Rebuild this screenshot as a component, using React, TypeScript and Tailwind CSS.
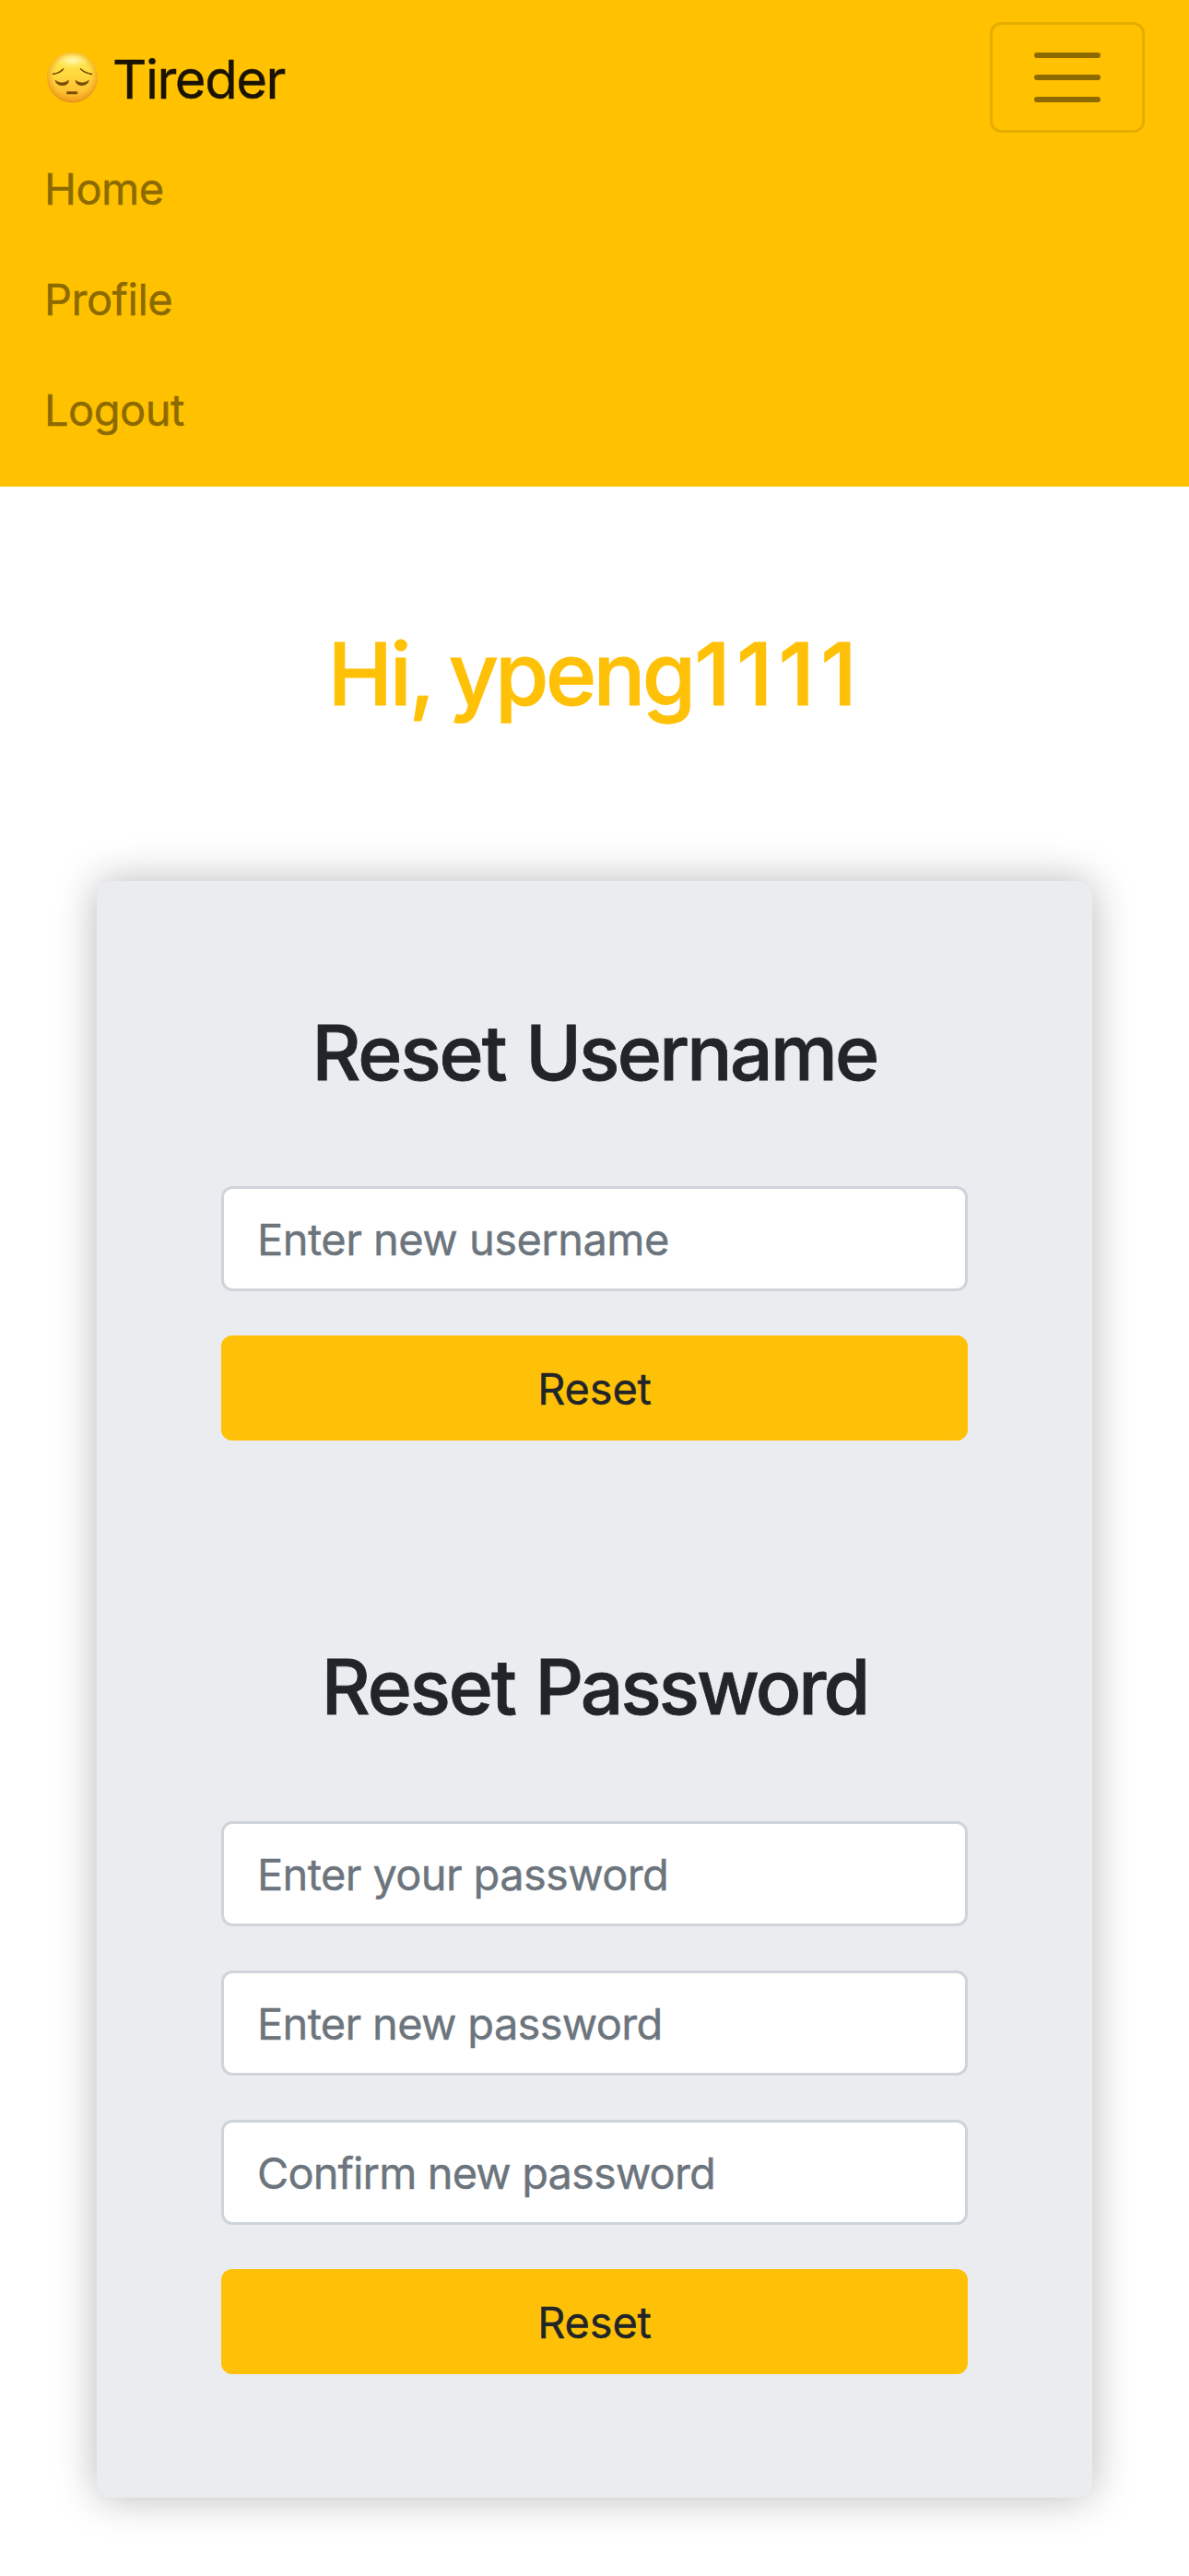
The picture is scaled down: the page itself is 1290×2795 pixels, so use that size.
import type { ReactNode } from "react";

function PensiveFace() {
  return (
    <svg viewBox="21 24 168 168" className="size-[56px]" role="img" aria-label="Pensive face">
      <defs>
        <linearGradient id="face-fill" x1="0" y1="0" x2="0" y2="1">
          <stop offset="0" stopColor="#ffec60" />
          <stop offset="0.4" stopColor="#ffdc40" />
          <stop offset="0.8" stopColor="#fdc033" />
          <stop offset="1" stopColor="#f7a922" />
        </linearGradient>
        <radialGradient id="face-rim" cx="0.5" cy="0.48" r="0.52">
          <stop offset="0.7" stopColor="#f09a10" stopOpacity="0" />
          <stop offset="0.92" stopColor="#ee9614" stopOpacity="0.55" />
          <stop offset="1" stopColor="#d9831c" stopOpacity="0.9" />
        </radialGradient>
        <radialGradient id="face-shine" cx="0.5" cy="0.5" r="0.5">
          <stop offset="0" stopColor="#fffbd0" stopOpacity="0.85" />
          <stop offset="1" stopColor="#fff490" stopOpacity="0" />
        </radialGradient>
      </defs>
      <circle cx="103.5" cy="108" r="82" fill="url(#face-fill)" />
      <circle cx="103.5" cy="108" r="82" fill="url(#face-rim)" />
      <ellipse cx="104" cy="53" rx="52" ry="24" fill="url(#face-shine)" />
      <g fill="none" stroke="#7a4a08" strokeLinecap="round">
        <path d="M41 97 Q62 94 74 81" strokeWidth="5" />
        <path d="M166 97 Q145 94 131 81" strokeWidth="5" />
      </g>
      <g fill="#7a4a08">
        <path d="M48 118 Q70 134 91 118 Q91 134 70 134 Q51 133 48 118Z" stroke="#7a4a08" strokeWidth="2" strokeLinejoin="round" />
        <path d="M114 118 Q135 134 157 118 Q154 133 135 134 Q116 134 114 118Z" stroke="#7a4a08" strokeWidth="2" strokeLinejoin="round" />
        <rect x="84" y="154" width="37" height="9" rx="4" />
      </g>
    </svg>
  );
}

function NavLink({ children }: { children: ReactNode }) {
  return (
    <a href="#" className="flex h-[120px] items-center pt-[2px] text-[47px] leading-[72px] tracking-[-0.5px] text-[#8c6a00] [-webkit-text-stroke:0.4px]">
      {children}
    </a>
  );
}

function Field({ placeholder, type = "text", className }: { placeholder: string; type?: string; className: string }) {
  return (
    <input
      type={type}
      placeholder={placeholder}
      className={`block h-[114px] w-full rounded-[12px] border-[3px] border-[#ced4da] bg-white pr-[35px] pl-[36px] text-[47px] [-webkit-text-stroke:0.4px] placeholder:text-[#6c757d] placeholder:opacity-100 ${className}`}
    />
  );
}

function SubmitButton() {
  return (
    <button type="button" className="block h-[114px] w-full rounded-[12px] bg-[#ffc107] pt-[2px] text-[47px] leading-[72px] tracking-[-0.2px] text-[#212529] [-webkit-text-stroke:0.4px]">
      Reset
    </button>
  );
}

export default function App() {
  return (
    <div className="min-h-[2795px] w-[1290px] bg-white font-[Inter,sans-serif] antialiased">
      <nav className="bg-[#ffc100] px-[48px] py-[24px]">
        <div className="flex h-[120px] items-center justify-between">
          <a href="#" className="flex items-center pl-[3px]">
            <PensiveFace />
            <span className="pt-[4px] pl-[15px] text-[58px] leading-[90px] tracking-[-1.5px] text-[#1a1300] [-webkit-text-stroke:0.4px]">Tireder</span>
          </a>
          <button type="button" aria-label="Toggle navigation" className="flex h-[120px] w-[168px] flex-col items-center justify-center gap-[18px] rounded-[12px] border-[3px] border-black/10">
            <span className="h-[6px] w-[72px] rounded-full bg-[#8c6a00]" />
            <span className="h-[6px] w-[72px] rounded-full bg-[#8c6a00]" />
            <span className="h-[6px] w-[72px] rounded-full bg-[#8c6a00]" />
          </button>
        </div>
        <NavLink>Home</NavLink>
        <NavLink>Profile</NavLink>
        <NavLink>Logout</NavLink>
      </nav>

      <h1 className="mt-[145px] h-[116px] pl-[2px] text-center text-[94px] leading-[116px] font-medium whitespace-nowrap text-[#ffc107] [-webkit-text-stroke:1px]">
        <span className="tracking-[-2.84px] [word-spacing:-4px]">Hi, </span>
        <span className="tracking-[-3.48px]">ypeng</span>
        <span className="ml-[2px] tracking-[6.65px]">1111</span>
      </h1>

      <main className="mx-[105px] mt-[167px] h-[1754px] rounded-[15px] bg-[#ebecf0] px-[135px] pt-[137px] shadow-[0_0_45px_rgba(0,0,0,0.28)]">
        <h2 className="h-[100px] text-center text-[82px] leading-[100px] font-medium whitespace-nowrap text-[#212529] [-webkit-text-stroke:0.8px]">
          <span className="tracking-[-2.08px] [word-spacing:2px]">Reset </span>
          <span className="tracking-[-2.67px]">Username</span>
        </h2>
        <form className="mt-[94px] flex flex-col gap-[48px]">
          <Field placeholder="Enter new username" className="tracking-[-0.53px]" />
          <SubmitButton />
        </form>

        <h2 className="mt-[218px] h-[100px] text-center text-[82px] leading-[100px] font-medium whitespace-nowrap text-[#212529] [-webkit-text-stroke:0.8px]">
          <span className="tracking-[-2.08px] [word-spacing:2px]">Reset </span>
          <span className="tracking-[-2.92px]">Password</span>
        </h2>
        <form className="mt-[95px] flex flex-col gap-[48px]">
          <Field type="password" placeholder="Enter your password" className="tracking-[-0.64px]" />
          <Field type="password" placeholder="Enter new password" className="tracking-[-0.69px]" />
          <Field type="password" placeholder="Confirm new password" className="tracking-[-0.89px]" />
          <SubmitButton />
        </form>
      </main>
    </div>
  );
}
